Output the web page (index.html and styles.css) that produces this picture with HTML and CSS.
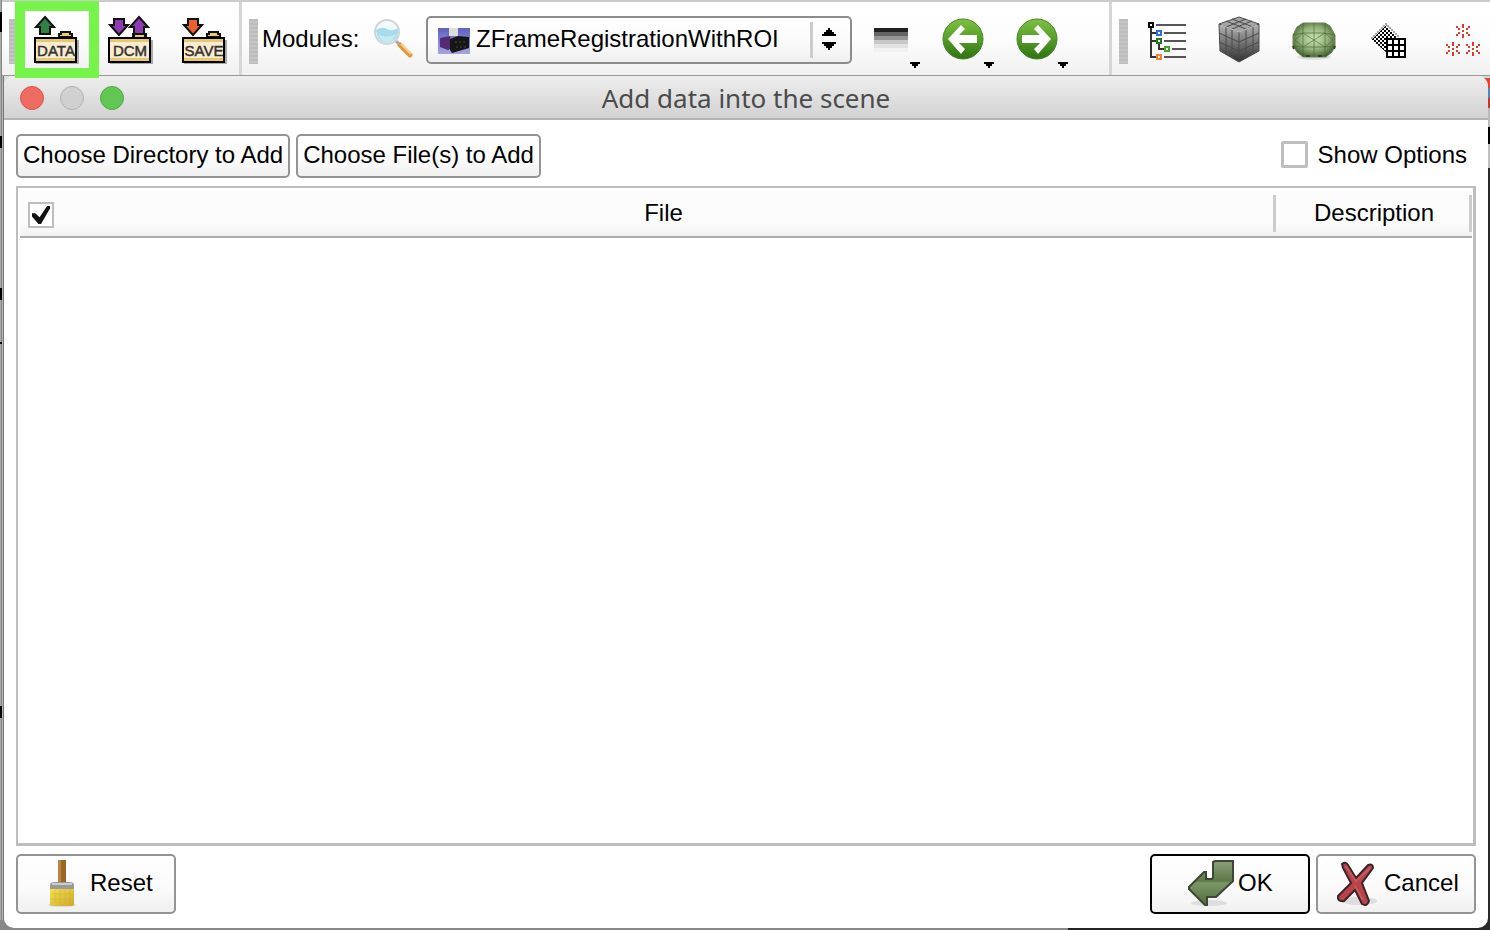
FILE: index.html
```html
<!DOCTYPE html>
<html lang="en">
<head>
<meta charset="utf-8">
<title>Add data into the scene</title>
<link rel="stylesheet" href="styles.css">
</head>
<body>
<svg width="0" height="0" class="defs" aria-hidden="true">
  <defs>
    <linearGradient id="green" x1="0" y1="0" x2="0" y2="1"><stop offset="0" stop-color="#7fc043"/><stop offset=".5" stop-color="#559e28"/><stop offset="1" stop-color="#2f7114"/></linearGradient>
    <linearGradient id="olive" x1="0" y1="0" x2="0" y2="1"><stop offset="0" stop-color="#8da078"/><stop offset=".45" stop-color="#5d7848"/><stop offset=".5" stop-color="#7d9766"/><stop offset="1" stop-color="#4f6c40"/></linearGradient>
    <linearGradient id="cubeside" x1="0" y1="0" x2="0" y2="1"><stop offset="0" stop-color="#b4b4b4"/><stop offset="1" stop-color="#303030"/></linearGradient>
    <radialGradient id="model" cx=".5" cy=".45" r=".6"><stop offset="0" stop-color="#cfe3b8"/><stop offset=".55" stop-color="#93b37a"/><stop offset="1" stop-color="#3c572b"/></radialGradient>
    <linearGradient id="bristle" x1="0" y1="0" x2="1" y2="1"><stop offset="0" stop-color="#f5e050"/><stop offset="1" stop-color="#cda82c"/></linearGradient>
    <linearGradient id="thumb" x1="0" y1="0" x2="0" y2="1"><stop offset="0" stop-color="#6061bd"/><stop offset="1" stop-color="#a5a6df"/></linearGradient>
    <pattern id="weave" width="8" height="8" patternUnits="userSpaceOnUse"><path d="M0 0h8v8H0z" fill="#fff"/><path d="M0 0h2v2H0zM2 2h2v2H2zM4 4h2v2H4zM6 6h2v2H6zM4 0h2v2H4zM0 4h2v2H0zM6 2h2v2H6zM2 6h2v2H2z"/></pattern>
    <g id="folder">
      <path d="M17 62h43V38h-2v22H17z" fill="#aaa"/>
      <path d="M40 35v-3h2v-2h9v2h2v3z" fill="#e9cc70" stroke="#111" stroke-width="2"/>
      <rect x="16" y="36" width="41" height="24" fill="#fbecd0" stroke="#000" stroke-width="2"/>
      <path d="M17 37h39v3H17zM17 56h39v3H17z" fill="#e6c86e"/>
    </g>
    <path id="up" d="M26 14l9 10h-4v7H21v-7h-4z" stroke="#111" stroke-width="2"/>
    <path id="down" d="M26 33l-9-10h4v-6h10v6h4z" stroke="#111" stroke-width="2"/>
    <path id="menu" d="M58 60h10v2h-2v2h-2v2h-2v-2h-2v-2h-2z"/>
    <path id="spark" fill="#e2382b" d="M-1-7h2v4h-2zM-1-1h2v2h-2zM-1 3h2v4h-2zM-7-5h2v2h-2zM-5-3h2v2h-2zM5-5h2v2h-2zM3-3h2v2H3zM-7 3h2v2h-2zM-5 1h2v2h-2zM5 3h2v2H5zM3 1h2v2H3z"/>
  </defs>
</svg>

<header class="toolbar">
  <div class="group">
    <span class="handle"></span>
    <button class="tool highlighted" aria-label="Load data"><svg viewBox="0 0 74 74"><use href="#folder"/><use href="#up" x="0" y="1" fill="#2f8148"/><text class="folder-text" x="37" y="54">DATA</text></svg></button>
    <button class="tool" aria-label="DICOM"><svg viewBox="0 0 74 74"><use href="#folder"/><use href="#down" fill="#8d3cb0"/><use href="#up" x="20" y="1" fill="#8d3cb0"/><path d="M41 35v-3h11v3" fill="#e9cc70" stroke="#111" stroke-width="2"/><text class="folder-text" x="37" y="54">DCM</text></svg></button>
    <button class="tool" aria-label="Save"><svg viewBox="0 0 74 74"><use href="#folder"/><use href="#down" fill="#ea6129"/><text class="folder-text" x="37" y="54">SAVE</text></svg></button>
  </div>
  <div class="group">
    <span class="handle"></span>
    <label class="modules-label" for="module">Modules:</label>
    <button class="search" aria-label="Find module"><svg viewBox="0 0 40 40">
      <path d="M27 26l10 10" stroke="#dc9a42" stroke-width="5" stroke-linecap="round"/><path d="M28 25l10 10" stroke="#f6cf8b" stroke-width="2"/>
      <path d="M22 21l4 4" stroke="#aaa" stroke-width="3"/>
      <circle cx="14" cy="13" r="12" fill="#f2fafb" stroke="#d0d6d8" stroke-width="2"/>
      <path d="M3 11q6-4 11-1t11-1q1 8-4 12t-11 2T3 11z" fill="#a9dcea"/><path d="M5 15q8 5 18 0-3 8-9 8T5 15z" fill="#c4eaf3"/>
    </svg></button>
    <span class="combo">
      <select id="module"><option>ZFrameRegistrationWithROI</option></select>
      <svg class="thumb" viewBox="0 0 32 26"><path fill="url(#thumb)" d="M0 0h32v26H0z"/><path d="M11 0h9v8h-9z" fill="#ddd"/><path d="M2 10l10-2 2 12-4 2-8-3z" fill="#542a72"/><path d="M12 11l8-3 11 1v11l-17 5-2-3z" fill="#161616"/><path d="M17 14h12M18 19h10" stroke="#4a4c1c" stroke-width="1" stroke-dasharray="2 2"/></svg>
      <svg class="spin" viewBox="0 0 26 40"><path d="M0 0h3v36H0z" fill="#ccc"/><path d="M18 6h2v2h2v2h2v2h2v2H12v-2h2v-2h2V8h2zM12 20h14v2h-2v2h-2v2h-2v2h-2v-2h-2v-2h-2v-2h-2z"/></svg>
    </span>
    <button class="tool" aria-label="Module history"><svg viewBox="0 0 74 74"><path d="M22 26h34v4H22z" fill="#202020"/><path d="M22 30h34v4H22z" fill="#646464"/><path d="M22 34h34v4H22z" fill="#959595"/><path d="M22 38h34v4H22z" fill="#c8c8c8"/><path d="M22 42h34v4H22z" fill="#e3e3e3"/><path d="M22 46h34v4H22z" fill="#f2f2f2"/><use href="#menu"/></svg></button>
    <button class="tool" aria-label="Back"><svg viewBox="0 0 74 74"><circle cx="37" cy="37" r="20" fill="url(#green)" stroke="#438724"/><path d="M22 37l13-14 4 4-6 6h18v8H33l6 6-4 5z" fill="#fff"/><use href="#menu"/></svg></button>
    <button class="tool" aria-label="Forward"><svg viewBox="0 0 74 74"><circle cx="37" cy="37" r="20" fill="url(#green)" stroke="#438724"/><path d="M51 37L38 23l-4 4 6 6H22v8h18l-6 6 4 5z" fill="#fff"/><use href="#menu"/></svg></button>
  </div>
  <div class="group">
    <span class="handle"></span>
    <button class="tool" aria-label="Data tree"><svg viewBox="0 0 74 74" fill="none" stroke-width="2"><path d="M21 25v30h5M21 31h5M21 39h5M29 41v6h5" stroke="#333"/><path d="M26 23h30M34 31h22M34 39h22M42 47h14M34 55h22" stroke="#555"/><g fill="#fff"><path d="M19 21h4v4h-4z" stroke="#000"/><path d="M27 29h4v4h-4z" stroke="#2a6aee"/><path d="M27 37h4v4h-4z" stroke="#27751c"/><path d="M35 45h4v4h-4z" stroke="#48a62d"/><path d="M27 53h4v4h-4z" stroke="#ef8135"/></g></svg></button>
    <button class="tool" aria-label="Volumes"><svg viewBox="0 0 74 74"><path d="M15 22l20-7 20 7-20 8z" fill="#a5a5a5"/><path d="M15 22l20 8v30L16 49z" fill="url(#cubeside)"/><path d="M55 22l-20 8v30l20-11z" fill="url(#cubeside)"/><path d="M15 22l20-7 20 7v27L35 60 16 49zM15 22l20 8 20-8M35 30v29M15 31l20 9 20-9M15 40l20 9 20-9M22 25v27M28 27v29M42 27v29M49 25v27M22 19l20 8M28 17l21 8M48 19l-20 8M42 17l-20 8" fill="none" stroke="#4b4b4b"/><path d="M17 23l18 7 18-7" fill="none" stroke="#c9c9c9"/></svg></button>
    <button class="tool" aria-label="Models"><svg viewBox="0 0 74 74"><ellipse cx="36" cy="55" rx="17" ry="3" fill="#e0e0e0"/><path d="M25 21h22l5 3 5 9v11l-3 6-6 5H25l-6-5-4-6V33l4-8z" fill="url(#model)" stroke="#6c8559"/><path d="M36 21v34M15 33l10-2h21l11 2M15 44l10 1h22l10-1M25 21v34M47 21v34M25 31l11 7 11-7M25 45l11-7 11 7M25 31l-8 7 8 7M47 31l8 7-8 7" fill="none" stroke="#4b6738" opacity=".65"/><path d="M15 44l1 3M57 44l-1 3M28 54h4M40 54h4" stroke="#2f4422" stroke-width="2"/></svg></button>
    <button class="tool" aria-label="Transforms"><svg viewBox="0 0 74 74"><path d="M20 37l14-14 12 14H35v14L20 38z" fill="url(#weave)"/><path d="M19 35h2v-2h2v-2h2v-2h2v-2h2v-2h2v-2h2v-2h2v2h2v2h2v2h2v2h2v2h2v2h2v2h-2v-2h-2v-2h-2v-2h-2v-2h-2v-2h-2v-2h-2v2h-2v2h-2v2h-2v2h-2v2h-2v2h-2v2h-2z" fill="#aaa"/><path d="M35 37h18v18H35z" fill="#fff" stroke="#000" stroke-width="2"/><path d="M41 37v18M47 37v18M35 43h18M35 49h18" stroke="#000" stroke-width="2"/></svg></button>
    <button class="tool" aria-label="Markups"><svg viewBox="0 0 74 74"><use href="#spark" x="37" y="29"/><use href="#spark" x="27" y="47"/><use href="#spark" x="47" y="47"/></svg></button>
  </div>
</header>

<main class="dialog">
  <div class="titlebar">
    <div class="lights"><button class="light close" aria-label="Close"></button><button class="light minimize" aria-label="Minimize" disabled></button><button class="light zoom" aria-label="Zoom"></button></div>
    <h1>Add data into the scene</h1>
  </div>
  <div class="content">
    <div class="row">
      <button class="push">Choose Directory to Add</button>
      <button class="push">Choose File(s) to Add</button>
      <label class="options"><input type="checkbox" class="check large">Show Options</label>
    </div>
    <div class="list">
      <table>
        <thead><tr>
          <th class="select-col"><input type="checkbox" class="check" aria-label="Select all" checked></th>
          <th class="file-col">File</th>
          <th class="description-col">Description</th>
        </tr></thead>
      </table>
    </div>
    <div class="row actions">
      <button class="push action reset"><svg viewBox="0 0 32 50"><ellipse cx="16" cy="47" rx="14" ry="2" fill="#ddd"/><path d="M12 2h8v23h-8z" fill="#9b6428"/><path d="M12 2h3v23h-3z" fill="#b98544"/><path d="M4 27q0-3 5-3h14q5 0 5 3v5H4z" fill="#999"/><path d="M6 25h20v2H6z" fill="#ccc"/><path d="M4 31h24v15q0 2-2 2H6q-2 0-2-2z" fill="url(#bristle)"/><path d="M9 32v13M14 32v13M19 32v13M24 32v13M5 36h22M5 41h22" stroke="#c9a932" opacity=".45"/></svg>Reset</button>
      <button class="push action ok"><svg viewBox="0 0 48 50"><ellipse cx="22" cy="45" rx="18" ry="3" fill="#ddd"/><path d="M26 4l2-1h18v20L29 39H20v8h-2L2 31v-2L17 14h2v7h5q2 0 2-2z" fill="url(#olive)" stroke="#3c4737" stroke-width="2"/></svg>OK</button>
      <button class="push action cancel"><svg viewBox="0 0 46 50"><ellipse cx="24" cy="43" rx="18" ry="4" fill="#ddd"/><path d="M7 6q3-3 6 1l8 13L33 7q5-2 5 3L27 25l7 18q-2 6-7 3L20 32 9 43q-7 1-6-5l13-13L8 10z" fill="#b8434b" stroke="#3b2225" stroke-width="2"/><path d="M11 8l10 15L35 10M20 28l8 14" fill="none" stroke="#d0676b" stroke-width="2" opacity=".6"/></svg>Cancel</button>
    </div>
  </div>
</main>
</body>
</html>
```
FILE: styles.css
```css
* { box-sizing: border-box; }

body {
  margin: 0;
  height: 100vh;
  display: flex;
  flex-direction: column;
  overflow: hidden;
  color: #000;
  font: 24px/28px "Liberation Sans", Arial, sans-serif;
  background:
    linear-gradient(#000, #000) 0 12px / 2px 20px no-repeat,
    linear-gradient(#000, #000) 0 136px / 2px 12px no-repeat,
    linear-gradient(#000, #000) 0 288px / 2px 12px no-repeat,
    linear-gradient(#000, #000) 0 342px / 2px 2px no-repeat,
    linear-gradient(#000, #000) 0 706px / 2px 12px no-repeat,
    linear-gradient(#c8dbe8 0 2px, #e5452f 2px 12px, #5687b4 12px 22px, #c53827 22px 32px, #bbb 32px 51px, #000 51px 68px, #c0c0c0 68px 92px, #29292b 92px) 100% 76px / 10px 100% no-repeat,
    linear-gradient(90deg, #888 0 1068px, #242426 1068px) 0 100% / 100% 10px no-repeat,
    linear-gradient(90deg, #aaa 0 1px, #858585 1px 2px, #b5b5b5 2px 3px, #777 3px 4px, #ddd 4px);
}

button, select, input { font: inherit; color: inherit; margin: 0; }
svg { display: block; }
.defs { position: absolute; }

.toolbar {
  display: flex;
  flex: none;
  height: 76px;
  margin-left: 2px;
  border-top: 2px solid #ccc;
  border-bottom: 1px solid #999;
  background: linear-gradient(#fff, #fdfdfd 50%, #f0f0f0);
}
.group {
  display: flex;
  align-items: center;
  flex: none;
  padding-left: 7px;
  border-right: 3px solid #d6d6d6;
}
.group:nth-child(1) { width: 240px; }
.group:nth-child(2) { width: 870px; }
.group:last-child { flex: 1; border: 0; min-width: 0; }
.handle {
  flex: none;
  width: 9px;
  height: 45px;
  margin-top: 6px;
  margin-right: 1px;
  background: repeating-linear-gradient(#bcbcbc 0 2px, #c5c5c5 2px 4px);
}
.group:last-child .handle { margin-right: 2px; }
.tool {
  flex: none;
  position: relative;
  width: 74px;
  height: 74px;
  padding: 0;
  border: 0;
  background: none;
}
.highlighted::after {
  content: "";
  position: absolute;
  z-index: 2;
  inset: -1px -6px -2px -4px;
  border: 10px solid #76f44a;
}
.folder-text {
  font: 15px "Liberation Sans", Arial, sans-serif;
  text-anchor: middle;
  fill: #333;
  stroke: #333;
  stroke-width: 0.5px;
}
.modules-label { margin-left: 3px; width: 111px; }
.search { flex: none; width: 40px; height: 40px; padding: 0; border: 0; background: none; margin-right: 13px; }
.combo { position: relative; flex: none; width: 426px; height: 48px; margin-top: 2px; }
.combo select {
  appearance: none;
  width: 100%;
  height: 100%;
  padding: 0 44px 2px 48px;
  border: 2px solid #8c8c8c;
  border-radius: 5px;
  background: linear-gradient(#fff, #fafafa 60%, #efefef);
}
.thumb { position: absolute; left: 12px; top: 12px; width: 32px; height: 26px; }
.spin { position: absolute; right: 16px; top: 6px; width: 26px; height: 40px; }

.dialog {
  flex: 1;
  display: flex;
  flex-direction: column;
  margin: 0 2px 2px 4px;
  border-radius: 10px;
  background: #fff;
  min-height: 0;
}
.titlebar {
  display: grid;
  grid-template-columns: 1fr auto 1fr;
  align-items: center;
  height: 44px;
  padding: 2px 16px 0;
  border-bottom: 2px solid #b2b2b2;
  border-radius: 10px 10px 0 0;
  background: linear-gradient(#eee, #d2d2d2);
}
.titlebar h1 {
  margin: 0;
  color: #4b4b4b;
  font: 26px/32px "Noto Sans", sans-serif;
}
.lights { display: flex; gap: 16px; }
.light { width: 24px; height: 24px; padding: 0; border: 1px solid; border-radius: 50%; }
.close { background: #ed6b60; border-color: #d9564c; }
.minimize { background: #d0d0d0; border-color: #b2b2b2; }
.zoom { background: #61c654; border-color: #4dab43; }

.content {
  flex: 1;
  display: flex;
  flex-direction: column;
  gap: 8px;
  padding: 14px 12px 14px;
  min-height: 0;
}
.row { display: flex; align-items: center; gap: 6px; }
.push {
  height: 44px;
  padding: 0 5px 3px;
  border: 2px solid #949494;
  border-radius: 5px;
  background: linear-gradient(#fff, #fafafa 60%, #f0f0f0);
  white-space: nowrap;
}
.options { display: flex; align-items: center; gap: 10px; margin: 0 9px 3px auto; }
.check {
  appearance: none;
  flex: none;
  display: block;
  width: 26px;
  height: 26px;
  border: 2px solid #bebebe;
  background: #fff;
}
.check.large { width: 27px; height: 27px; border-width: 3px; border-radius: 2px; }
.check:checked::before {
  content: "";
  display: block;
  width: 18px;
  height: 18px;
  margin: 2px;
  background: #111;
  clip-path: polygon(0 40%, 18% 40%, 42% 62%, 84% 0, 100% 0, 100% 14%, 50% 100%, 36% 100%, 0 58%);
}

.list {
  flex: 1;
  min-height: 0;
  padding: 2px 1px 0 2px;
  border: 2px solid #bebebe;
  border-width: 2px 3px 3px 2px;
}
table { width: 100%; border-collapse: separate; border-spacing: 0; table-layout: fixed; }
th {
  position: relative;
  height: 48px;
  padding: 0 5px 0 0;
  border-bottom: 2px solid #aaa;
  background: linear-gradient(#fcfcfc 70%, #f1f1f1);
  font-weight: normal;
}
.select-col { width: 36px; padding: 4px 0 0 8px; }
.description-col { width: 196px; padding: 0; }
.file-col::after, .description-col::after {
  content: "";
  position: absolute;
  right: 0;
  top: 5px;
  width: 3px;
  height: 37px;
  background: #ccc;
}

.action { display: flex; align-items: center; justify-content: flex-start; width: 160px; height: 60px; }
.action svg { flex: none; height: 50px; }
.reset { padding-left: 28px; gap: 12px; }
.reset svg { width: 32px; }
.ok { margin-left: auto; padding-left: 35px; gap: 3px; border-color: #000; }
.ok svg { width: 48px; }
.cancel { padding-left: 17px; gap: 3px; }
.cancel svg { width: 46px; }
```
